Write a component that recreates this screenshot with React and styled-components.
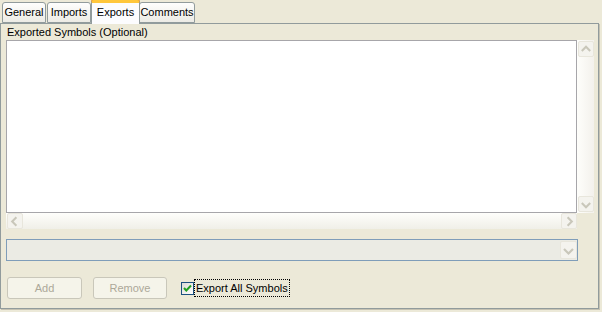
import styled, { createGlobalStyle } from 'styled-components'

const GlobalStyle = createGlobalStyle`
	html, body {
		margin: 0;
		padding: 0;
		background: #ece9d8;
	}
	body {
		font-family: "Liberation Sans", Arial, sans-serif;
		font-size: 11px;
		color: #000;
	}
`

const tabs = [
	{ label: 'General', width: 44 },
	{ label: 'Imports', width: 44 },
	{ label: 'Exports', width: 49, active: true },
	{ label: 'Comments', width: 56 },
]

const Arrow = ({ dir }) => {
	const paths = {
		up: 'M3 9 L7.5 4.5 L12 9',
		down: 'M3 6 L7.5 10.5 L12 6',
		left: 'M9 3 L4.5 7.5 L9 12',
		right: 'M6 3 L10.5 7.5 L6 12',
	}
	return (
		<svg width="15" height="15" viewBox="0 0 15 15">
			<path d={paths[dir]} fill="none" stroke="#c9c7ba" strokeWidth="2.2" />
		</svg>
	)
}

const App = () => {
	return (
		<>
			<GlobalStyle />
			<Window>
				<TabStrip>
					{tabs.map(tab => (
						<Tab key={tab.label} $active={tab.active} $width={tab.width}>
							{tab.label}
						</Tab>
					))}
				</TabStrip>
				<Panel>
					<Label>Exported Symbols (Optional)</Label>
					<ScrollPane>
						<Viewport />
						<VScroll>
							<ArrowButton><Arrow dir="up" /></ArrowButton>
							<ArrowButton><Arrow dir="down" /></ArrowButton>
						</VScroll>
						<HScroll>
							<ArrowButton><Arrow dir="left" /></ArrowButton>
							<ArrowButton><Arrow dir="right" /></ArrowButton>
						</HScroll>
					</ScrollPane>
					<Combo>
						<ComboArrow><Arrow dir="down" /></ComboArrow>
					</Combo>
					<ButtonRow>
						<Button $width={75} disabled>Add</Button>
						<Button $width={74} disabled>Remove</Button>
						<CheckRow>
							<CheckBox>
								<svg width="11" height="11" viewBox="0 0 11 11">
									<path d="M2 5 L4.3 7.5 L9 2.5" fill="none" stroke="#21a121" strokeWidth="2" />
								</svg>
							</CheckBox>
							<CheckLabel>Export All Symbols</CheckLabel>
						</CheckRow>
					</ButtonRow>
				</Panel>
			</Window>
		</>
	)
}

const Window = styled.div`
	width: 602px;
	height: 312px;
	overflow: hidden;
`

const TabStrip = styled.div`
	display: flex;
	align-items: flex-end;
	height: 24px;
	padding-left: 2px;
	position: relative;
	z-index: 1;
	margin-bottom: -1px;
`

const Tab = styled.div`
	box-sizing: border-box;
	width: ${p => p.$width}px;
	height: ${p => (p.$active ? 24 : 21)}px;
	margin: ${p => (p.$active ? '0 -1px 0 -1px' : '0 1px 1px 0')};
	border: 1px solid #919b9c;
	border-bottom: ${p => (p.$active ? 'none' : '1px solid #919b9c')};
	border-top: ${p => (p.$active ? '3px solid #ffc73c' : '1px solid #919b9c')};
	border-radius: 3px 3px 0 0;
	background: ${p => (p.$active ? '#fcfcfe' : 'linear-gradient(#fefefd, #ecebe5)')};
	box-shadow: ${p => (p.$active ? 'inset 0 -1px 0 #fcfcfe, 0 -1px 0 #e68b2c' : 'none')};
	display: flex;
	justify-content: center;
	align-items: center;
	padding-bottom: ${p => (p.$active ? 3 : 0)}px;
	font-size: 11px;
	line-height: 1;
	white-space: nowrap;
`

const Panel = styled.div`
	box-sizing: border-box;
	width: 599px;
	height: 286px;
	border: 1px solid #919b9c;
	box-shadow: 1px 1px 0 #c5c2b2;
	padding: 0 4px 0 5px;
	display: flex;
	flex-direction: column;
`

const Label = styled.div`
	height: 16px;
	line-height: 17px;
	padding-left: 1px;
`

const ScrollPane = styled.div`
	display: grid;
	grid-template-columns: 571px 17px;
	grid-template-rows: 173px 16px;
`

const Viewport = styled.div`
	background: #fff;
	border: 1px solid #a7a6aa;
`

const VScroll = styled.div`
	display: flex;
	flex-direction: column;
	justify-content: space-between;
	align-items: center;
	padding: 1px 0;
	background: linear-gradient(90deg, #fefefb, #f3f1ec);
`

const HScroll = styled.div`
	display: flex;
	justify-content: space-between;
	align-items: center;
	padding: 0 0 0 1px;
	background: linear-gradient(#fefefb, #f0efe8);
`

const ArrowButton = styled.div`
	box-sizing: border-box;
	width: 16px;
	height: 16px;
	border: 1px solid #e8e6dc;
	border-radius: 2px;
	background: #f4f3ee;
	display: flex;
	align-items: center;
	justify-content: center;
`

const Combo = styled.div`
	box-sizing: border-box;
	width: 572px;
	height: 22px;
	margin-top: 10px;
	border: 1px solid #7f9db9;
	background: #ebebe4;
	display: flex;
	justify-content: flex-end;
	align-items: center;
`

const ComboArrow = styled(ArrowButton)`
	width: 17px;
	height: 18px;
`

const ButtonRow = styled.div`
	display: flex;
	align-items: center;
	margin-top: 16px;
	padding-left: 1px;
	gap: 11px;
`

const Button = styled.button`
	box-sizing: border-box;
	width: ${p => p.$width}px;
	height: 22px;
	border: 1px solid #c9c7ba;
	border-radius: 3px;
	background: #f5f4ea;
	color: #aca899;
	font-family: "Liberation Sans", Arial, sans-serif;
	font-size: 11px;
	padding: 0;
`

const CheckRow = styled.div`
	display: flex;
	align-items: center;
	margin-left: 3px;
`

const CheckBox = styled.div`
	box-sizing: border-box;
	width: 13px;
	height: 13px;
	border: 1px solid #1c5180;
	background: linear-gradient(135deg, #dcdbd5, #fff);
	display: flex;
	align-items: center;
	justify-content: center;
`

const CheckLabel = styled.span`
	margin-left: 1px;
	padding: 1px 1px;
	outline: 1px dotted #000;
	outline-offset: 0;
	line-height: 14px;
`

export default App
